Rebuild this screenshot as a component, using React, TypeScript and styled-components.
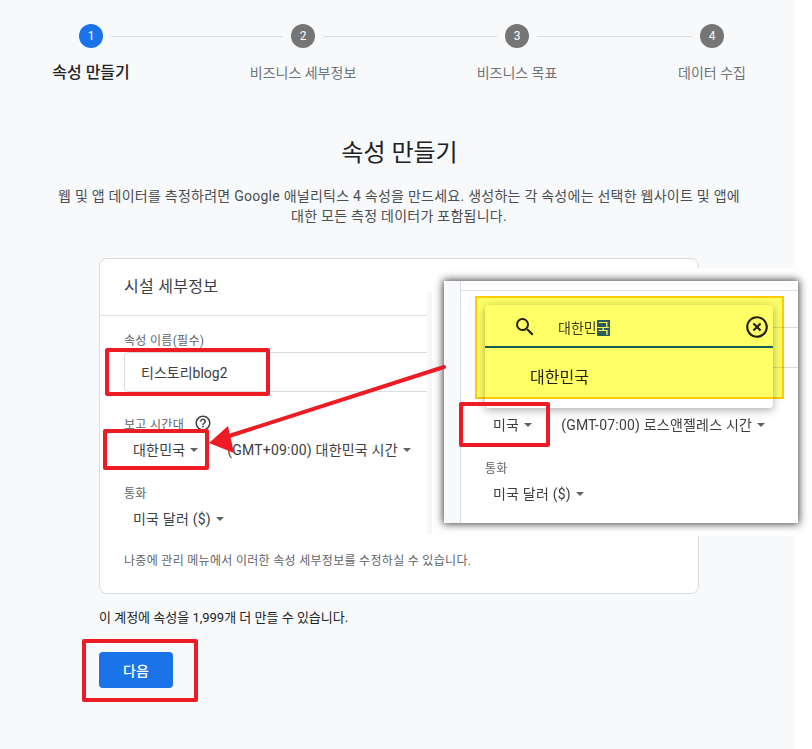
import React from 'react';
import styled, { createGlobalStyle } from 'styled-components';
import { MdHelpOutline, MdHighlightOff, MdSearch } from 'react-icons/md';

const GlobalStyle = createGlobalStyle`
  html, body {
    margin: 0;
    background: #fff;
    font-family: Roboto, 'Noto Sans CJK KR', sans-serif;
  }
`;

const Page = styled.div`
  position: relative;
  width: 795px;
  height: 749px;
  overflow: visible;
  background: #f8f9fa;
  box-sizing: border-box;
  padding-top: 24px;
`;

const Stepper = styled.div`
  display: flex;
  align-items: flex-start;
  padding-left: 79px;
`;

const Step = styled.div`
  display: flex;
  flex-direction: column;
  align-items: center;
  width: 24px;
`;

const Circle = styled.div<{ $active?: boolean }>`
  display: flex;
  flex: none;
  align-items: center;
  justify-content: center;
  width: 24px;
  height: 24px;
  border-radius: 50%;
  background: ${(p) => (p.$active ? '#1a73e8' : '#757575')};
  color: #fff;
  font-size: 12px;
`;

const StepLabel = styled.div<{ $active?: boolean }>`
  margin-top: 15px;
  line-height: 20px;
  font-size: ${(p) => (p.$active ? 16 : 14)}px;
  white-space: nowrap;
  font-weight: ${(p) => (p.$active ? 500 : 400)};
  color: ${(p) => (p.$active ? '#202124' : '#6f7478')};
`;

const Connector = styled.div<{ $width: number }>`
  flex: none;
  width: ${(p) => p.$width}px;
  height: 1px;
  margin: 12px 8px 0;
  background: #dadce0;
`;

const Heading = styled.h1`
  margin: 54px 0 0;
  padding-left: 4px;
  text-align: center;
  font-size: 24px;
  line-height: 32px;
  font-weight: 400;
  color: #202124;
`;

const Intro = styled.p`
  width: 700px;
  margin: 17px 0 0 49px;
  text-align: center;
  font-size: 14px;
  line-height: 20px;
  letter-spacing: 0.25px;
  color: #4a4e52;
`;

const Card = styled.section`
  box-sizing: border-box;
  width: 600px;
  height: 336px;
  margin: 32px 0 0 99px;
  background: #fff;
  border: 1px solid #dadce0;
  border-radius: 8px;
`;

const CardHeader = styled.div`
  box-sizing: border-box;
  display: flex;
  align-items: center;
  height: 57px;
  padding: 0 0 4px 24px;
  border-bottom: 1px solid #e0e0e0;
  font-size: 16px;
  letter-spacing: 0.3px;
  color: #3c4043;
`;

const CardBody = styled.div`
  display: flex;
  flex-direction: column;
  align-items: flex-start;
  padding: 14px 24px 0;
`;

const FieldLabel = styled.label<{ $top?: number }>`
  display: flex;
  align-items: center;
  gap: 10px;
  height: 18px;
  margin-top: ${(p) => p.$top ?? 0}px;
  font-size: 12px;
  letter-spacing: 0.3px;
  color: #5f6368;

  svg {
    color: #3c4043;
  }
`;

const TextField = styled.div`
  box-sizing: border-box;
  display: flex;
  align-items: center;
  align-self: stretch;
  height: 40px;
  margin-top: 4px;
  padding-left: 16px;
  border: 1px solid #dadce0;
  border-radius: 4px;
  font-size: 14px;
  color: #3c4043;
`;

const SelectRow = styled.div`
  box-sizing: border-box;
  display: flex;
  align-items: center;
  height: 36px;
  padding-bottom: 2px;
  padding-left: 1px;
  gap: 21px;
`;

const Select = styled.div`
  display: flex;
  align-items: center;
  gap: 5px;
  padding-left: 8px;
  font-size: 14px;
  letter-spacing: 0.2px;
  color: #3c4043;
  white-space: nowrap;
`;

const Caret = styled.span`
  width: 0;
  height: 0;
  margin-top: 2px;
  border-left: 4px solid transparent;
  border-right: 4px solid transparent;
  border-top: 4px solid #5f6368;
`;

const Note = styled.div`
  margin-top: 15px;
  font-size: 12px;
  line-height: 18px;
  letter-spacing: 0.3px;
  color: #5f6368;
`;

const Quota = styled.div`
  margin: 14px 0 0 99px;
  font-size: 13px;
  line-height: 20px;
  color: #202124;
`;

const NextButton = styled.button`
  display: block;
  width: 74px;
  height: 36px;
  margin: 24px 0 0 99px;
  border: 0;
  border-radius: 4px;
  background: #1a73e8;
  color: #fff;
  font: 500 14px Roboto, 'Noto Sans CJK KR', sans-serif;
`;

const PaleEdge = styled.div`
  position: absolute;
  left: 427px;
  top: 292px;
  width: 5px;
  height: 242px;
  background: #f6f7f9;
`;

const Callout = styled.div`
  position: absolute;
  left: 432px;
  top: 268px;
  width: 380px;
  height: 268px;
  box-sizing: border-box;
  padding: 13px 14px 13px 12px;
  background: #fff;
`;

const CapturedWindow = styled.div`
  position: relative;
  display: flex;
  height: 242px;
  background: #fff;
  box-shadow: 0 0 8px 1px rgba(0, 0, 0, 0.75);
  isolation: isolate;
`;

const SideStrip = styled.div`
  flex: none;
  width: 16px;
  background: #f8f9fa;
  border-right: 1px solid #dadce0;
`;

const Pane = styled.div`
  display: flex;
  flex: 1;
  flex-direction: column;
  align-items: flex-start;
  padding-top: 9px;
  min-width: 0;
`;

const PaneRule = styled.div`
  align-self: stretch;
  height: 1px;
  background: #e0e0e0;
`;

const PaneInput = styled.div`
  box-sizing: border-box;
  align-self: stretch;
  height: 41px;
  margin: 36px 0 39px 24px;
  border: 1px solid #dadce0;
  border-right: 0;
`;

const PaneRow = styled(SelectRow)`
  padding-left: 24px;
  gap: 21px;
`;

const PaneLabel = styled(FieldLabel)`
  margin-left: 24px;
`;

const Dropdown = styled.div`
  position: absolute;
  left: 41px;
  top: 24px;
  width: 288px;
  height: 103px;
  border-radius: 4px;
  background: #fff;
  box-shadow: 0 2px 8px rgba(60, 64, 67, 0.45);
`;

const SearchBar = styled.div`
  box-sizing: border-box;
  display: flex;
  align-items: center;
  height: 43px;
  padding: 3px 3px 0 28px;
  border-bottom: 2px solid #1a5ce1;
  font-size: 14px;
  color: #3c4043;

  svg {
    flex: none;
    color: #202124;
  }
`;

const SearchText = styled.span`
  flex: 1;
  margin-left: 21px;
`;

const Selected = styled.span`
  background: #2a5ce1;
  color: #fff;
`;

const Option = styled.div`
  padding: 20px 0 0 45px;
  font-size: 16px;
  line-height: 20px;
  color: #202124;
`;

const Highlight = styled.div`
  position: absolute;
  left: 31px;
  top: 15px;
  box-sizing: border-box;
  width: 309px;
  height: 103px;
  border: 2px solid #ffcc00;
  background: #ffff66;
  mix-blend-mode: multiply;
  pointer-events: none;
`;

const Mark = styled.div<{ $x: number; $y: number; $w: number; $h: number }>`
  position: absolute;
  left: ${(p) => p.$x}px;
  top: ${(p) => p.$y}px;
  width: ${(p) => p.$w}px;
  height: ${(p) => p.$h}px;
  box-sizing: border-box;
  border: 4px solid #ed1c24;
  border-radius: 2px;
`;

const Arrow = styled.svg`
  position: absolute;
  left: 205px;
  top: 360px;
`;

const STEPS = [
  { label: '속성 만들기', gap: 172 },
  { label: '비즈니스 세부정보', gap: 174 },
  { label: '비즈니스 목표', gap: 155 },
  { label: '데이터 수집', gap: 0 },
];

const App = (): React.ReactElement => {
  return (
    <Page>
      <GlobalStyle />
      <Stepper>
        {STEPS.map((step, i) => (
          <React.Fragment key={step.label}>
            <Step>
              <Circle $active={i === 0}>{i + 1}</Circle>
              <StepLabel $active={i === 0}>{step.label}</StepLabel>
            </Step>
            {step.gap > 0 && <Connector $width={step.gap} />}
          </React.Fragment>
        ))}
      </Stepper>

      <Heading>속성 만들기</Heading>
      <Intro>
        웹 및 앱 데이터를 측정하려면 Google 애널리틱스 4 속성을 만드세요. 생성하는 각 속성에는 선택한 웹사이트 및 앱에
        <br />
        대한 모든 측정 데이터가 포함됩니다.
      </Intro>

      <Card>
        <CardHeader>시설 세부정보</CardHeader>
        <CardBody>
          <FieldLabel>속성 이름(필수)</FieldLabel>
          <TextField>티스토리blog2</TextField>
          <FieldLabel $top={22}>
            보고 시간대 <MdHelpOutline size={18} />
          </FieldLabel>
          <SelectRow>
            <Select>
              대한민국 <Caret />
            </Select>
            <Select>
              (GMT+09:00) 대한민국 시간 <Caret />
            </Select>
          </SelectRow>
          <FieldLabel $top={15}>통화</FieldLabel>
          <SelectRow>
            <Select>
              미국 달러 ($) <Caret />
            </Select>
          </SelectRow>
          <Note>나중에 관리 메뉴에서 이러한 속성 세부정보를 수정하실 수 있습니다.</Note>
        </CardBody>
      </Card>

      <Quota>이 계정에 속성을 1,999개 더 만들 수 있습니다.</Quota>
      <NextButton>다음</NextButton>

      <PaleEdge />
      <Callout>
        <CapturedWindow>
          <SideStrip />
          <Pane>
            <PaneRule />
            <PaneInput />
            <PaneRow>
              <Select>
                미국 <Caret />
              </Select>
              <Select>
                (GMT-07:00) 로스앤젤레스 시간 <Caret />
              </Select>
            </PaneRow>
            <PaneLabel $top={15}>통화</PaneLabel>
            <PaneRow>
              <Select>
                미국 달러 ($) <Caret />
              </Select>
            </PaneRow>
          </Pane>
          <Dropdown>
            <SearchBar>
              <MdSearch size={24} />
              <SearchText>
                대한민<Selected>국</Selected>
              </SearchText>
              <MdHighlightOff size={26} />
            </SearchBar>
            <Option>대한민국</Option>
          </Dropdown>
          <Highlight />
        </CapturedWindow>
      </Callout>

      <Arrow width="245" height="100" viewBox="205 360 245 100">
        <line x1="444" y1="367" x2="226" y2="437" stroke="#ed1c24" strokeWidth="4" strokeLinecap="round" />
        <polygon points="209,443 228,426 234,453" fill="#ed1c24" />
      </Arrow>
      <Mark $x={105} $y={348} $w={165} $h={48} />
      <Mark $x={103} $y={429} $w={106} $h={41} />
      <Mark $x={459} $y={402} $w={91} $h={45} />
      <Mark $x={82} $y={639} $w={116} $h={63} />
    </Page>
  );
};

export default App;
